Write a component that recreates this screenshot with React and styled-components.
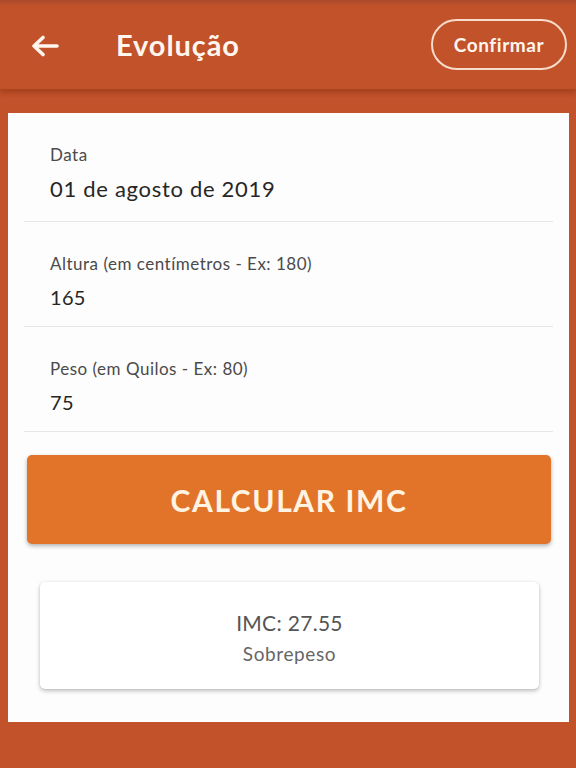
import styled, { createGlobalStyle } from "styled-components";

const GlobalStyle = createGlobalStyle`
    html, body {
        margin: 0;
        padding: 0;
        background-color: #c1522a;
        font-family: Lato, "Noto Sans", sans-serif;
    }
`;

const fields = [
    { label: "Data", value: "01 de agosto de 2019", big: true },
    { label: "Altura (em centímetros - Ex: 180)", value: "165" },
    { label: "Peso (em Quilos - Ex: 80)", value: "75" },
];

export default function App() {
    return (
        <Screen>
            <GlobalStyle />
            <Header>
                <BackBtn>
                    <svg width="28" height="22" viewBox="0 0 28 22" fill="none">
                        <path
                            d="M26 11H4M12 2.5L3 11l9 8.5"
                            stroke="#fff6ee"
                            strokeWidth="3.6"
                            strokeLinecap="round"
                            strokeLinejoin="round"
                        />
                    </svg>
                </BackBtn>
                <Title>Evolução</Title>
                <ConfirmBtn>Confirmar</ConfirmBtn>
            </Header>
            <Card>
                {fields.map((f) => (
                    <Field key={f.label} $first={f.big}>
                        <Label>{f.label}</Label>
                        <Value $big={f.big}>{f.value}</Value>
                    </Field>
                ))}
                <CalcBtn>CALCULAR IMC</CalcBtn>
                <Result>
                    <ResultValue>IMC: 27.55</ResultValue>
                    <ResultText>Sobrepeso</ResultText>
                </Result>
            </Card>
        </Screen>
    );
}

const Screen = styled.div`
    width: 576px;
    height: 768px;
    display: flex;
    flex-direction: column;
    background-color: #c1522a;
    overflow: hidden;
`;

const Header = styled.div`
    height: 89px;
    display: flex;
    align-items: center;
    padding: 0 9px 0 31px;
    background: linear-gradient(#a94a2e 0px, #c1522a 6px);
    box-shadow: 0 4px 4px rgba(120, 40, 10, 0.35);
    box-sizing: border-box;
`;

const BackBtn = styled.div`
    display: flex;
    align-items: center;
    width: 28px;
    height: 22px;
    margin-top: 2px;
`;

const Title = styled.h1`
    flex: 1;
    margin: 0 0 0 57px;
    font-size: 29px;
    font-weight: 700;
    color: #fff6ee;
    letter-spacing: 0.9px;
`;

const ConfirmBtn = styled.div`
    width: 136px;
    height: 51px;
    border: 2px solid #f7dccb;
    border-radius: 26px;
    box-sizing: border-box;
    display: flex;
    align-items: center;
    justify-content: center;
    color: #fff6ee;
    font-size: 19px;
    font-weight: 700;
    letter-spacing: 0.6px;
    margin-bottom: 1px;
`;

const Card = styled.div`
    margin: 24px 7px 0 8px;
    height: 609px;
    background-color: #fdfdfd;
    padding: 20px 16px 0 16px;
    box-sizing: border-box;
`;

const Field = styled.div`
    padding: ${(p) => (p.$first ? "12px" : "32px")} 0 0 26px;
    height: ${(p) => (p.$first ? "89px" : "105px")};
    box-sizing: border-box;
    border-bottom: 1px solid #e6e6e6;
`;

const Label = styled.div`
    font-size: 17px;
    color: #4a4a4a;
    line-height: 20px;
    letter-spacing: 0.5px;
`;

const Value = styled.div`
    margin-top: ${(p) => (p.$big ? "12px" : "11px")};
    font-size: ${(p) => (p.$big ? "22px" : "20px")};
    color: #262626;
    line-height: 24px;
    letter-spacing: ${(p) => (p.$big ? "0.7px" : "0.3px")};
`;

const CalcBtn = styled.div`
    margin: 23px 2px 0 3px;
    height: 89px;
    background-color: #e17428;
    border-radius: 5px;
    box-shadow: 0 2px 4px rgba(0, 0, 0, 0.3);
    display: flex;
    align-items: center;
    justify-content: center;
    color: #fff3e2;
    font-size: 30px;
    font-weight: 700;
    letter-spacing: 1.6px;
`;

const Result = styled.div`
    margin: 38px 14px 0 16px;
    height: 107px;
    padding-top: 4px;
    box-sizing: border-box;
    background-color: #ffffff;
    border-radius: 5px;
    box-shadow: 0 2px 4px rgba(0, 0, 0, 0.25), 0 0 2px rgba(0, 0, 0, 0.08);
    display: flex;
    flex-direction: column;
    align-items: center;
    justify-content: center;
    gap: 8px;
`;

const ResultValue = styled.div`
    font-size: 21px;
    color: #555;
    line-height: 24px;
    letter-spacing: 0.3px;
`;

const ResultText = styled.div`
    font-size: 19px;
    color: #666;
    line-height: 22px;
    letter-spacing: 0.6px;
`;
